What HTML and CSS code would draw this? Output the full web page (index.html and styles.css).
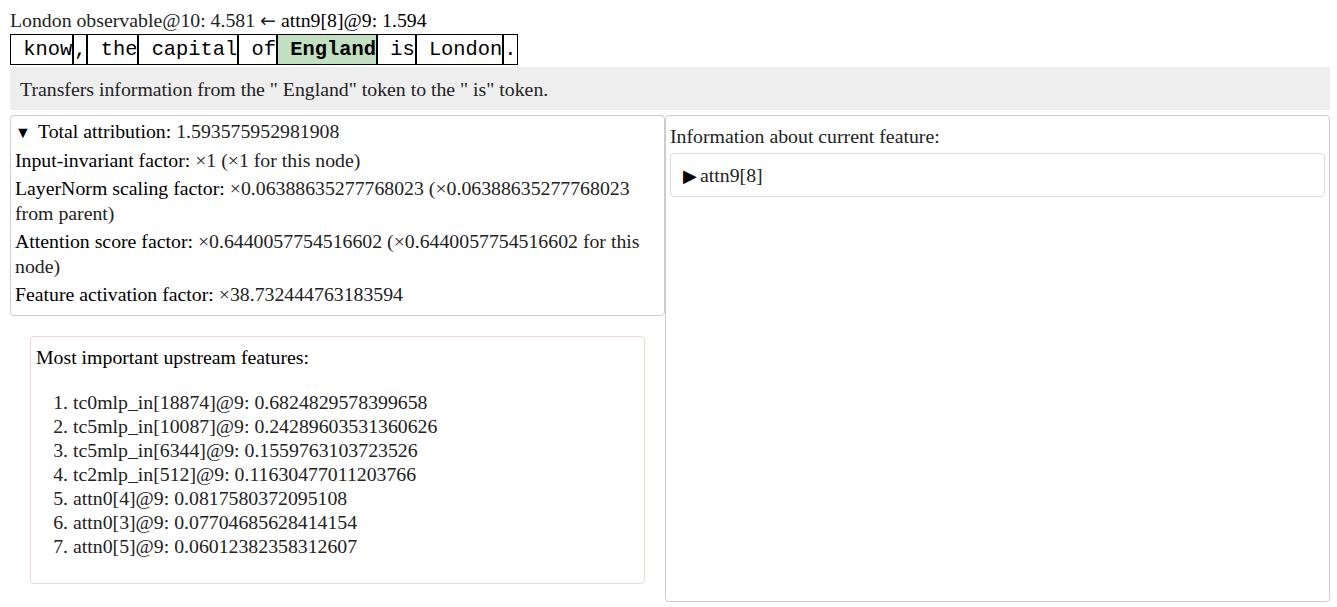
FILE: index.html
```html
<!DOCTYPE html>
<html>
<head>
<meta charset="utf-8">
<link rel="stylesheet" href="styles.css">
</head>
<body>
<div class="header">London observable@10: 4.581 <span class="arrow">←</span> <span class="hl">attn9[8]@9: 1.594</span></div>
<div class="tokens"><span class="tok"> know</span><span class="tok">,</span><span class="tok"> the</span><span class="tok"> capital</span><span class="tok"> of</span><span class="tok active"> England</span><span class="tok"> is</span><span class="tok"> London</span><span class="tok">.</span></div>
<div class="desc">Transfers information from the " England" token to the " is" token.</div>
<div class="columns">
  <div class="leftcol">
    <div class="panel attr">
      <div class="summary"><span class="marker">▼</span><span class="lbl">Total attribution:</span> 1.593575952981908</div>
      <div class="row"><span class="lbl">Input-invariant factor:</span> ×1 (×1 for this node)</div>
      <div class="row"><span class="lbl">LayerNorm scaling factor:</span> ×0.06388635277768023 (×0.06388635277768023 from parent)</div>
      <div class="row"><span class="lbl">Attention score factor:</span> ×0.6440057754516602 (×0.6440057754516602 for this node)</div>
      <div class="row"><span class="lbl">Feature activation factor:</span> ×38.732444763183594</div>
    </div>
    <div class="upstream">
      <div class="title">Most important upstream features:</div>
      <ol class="feats">
        <li>tc0mlp_in[18874]@9: 0.6824829578399658</li>
        <li>tc5mlp_in[10087]@9: 0.24289603531360626</li>
        <li>tc5mlp_in[6344]@9: 0.1559763103723526</li>
        <li>tc2mlp_in[512]@9: 0.11630477011203766</li>
        <li>attn0[4]@9: 0.0817580372095108</li>
        <li>attn0[3]@9: 0.07704685628414154</li>
        <li>attn0[5]@9: 0.06012382358312607</li>
      </ol>
    </div>
  </div>
  <div class="panel info">
    <div class="info-title">Information about current feature:</div>
    <div class="feature-box"><span class="tri">▶</span>attn9[8]</div>
  </div>
</div>
</body>
</html>
```

FILE: styles.css
```css
html, body {
  margin: 0;
  padding: 0;
  background: #fff;
}
body {
  padding: 8px 7px 0 10px;
  font-family: "Liberation Serif", "Times New Roman", serif;
  font-size: 19.8px;
  line-height: 24px;
  color: #222;
}
.header {
  line-height: 24px;
}
.arrow {
  font-family: "DejaVu Sans", sans-serif;
  font-size: 19px;
  line-height: 0;
}
.hl {
  color: #000;
}
.tokens {
  margin-top: 2px;
  display: flex;
}
.tok {
  font-family: "Liberation Mono", "Courier New", monospace;
  font-size: 20.4px;
  line-height: 23px;
  padding: 3px 0;
  border: 1px solid #000;
  white-space: pre;
  color: #000;
}
.tok.active {
  background: #c1dfc1;
  font-weight: bold;
}
.desc {
  margin-top: 2px;
  background: #eeeeee;
  padding: 10px 10px 9px;
}
.columns {
  margin-top: 5px;
  display: grid;
  grid-template-columns: 655px 1fr;
  align-items: stretch;
}
.panel {
  border: 1px solid #cccccc;
  border-radius: 4px;
}
.attr {
  padding: 3px 4px 8px;
}
.summary {
  line-height: 24.5px;
}
.marker {
  display: inline-block;
  width: 23px;
  font-size: 16px;
  line-height: 0;
  color: #000;
}
.row {
  margin-top: 4px;
  line-height: 24.5px;
}
.lbl {
  color: #000;
}
.upstream {
  margin: 20px 20px 18px;
  border: 1px solid #efd6d0;
  border-radius: 4px;
  padding: 8px 5px;
}
.title {
  color: #000;
}
.feats {
  margin: 21px 0 17px;
  padding-left: 37px;
}
.info {
  padding: 8px 4px;
}
.info-title {
  margin-bottom: 5px;
}
.feature-box {
  border: 1px solid #dddddd;
  border-radius: 4px;
  padding: 9px 12px 9px;
}
.tri {
  color: #000;
  font-size: 18px;
  line-height: 0;
  margin-right: 3px;
}
```
